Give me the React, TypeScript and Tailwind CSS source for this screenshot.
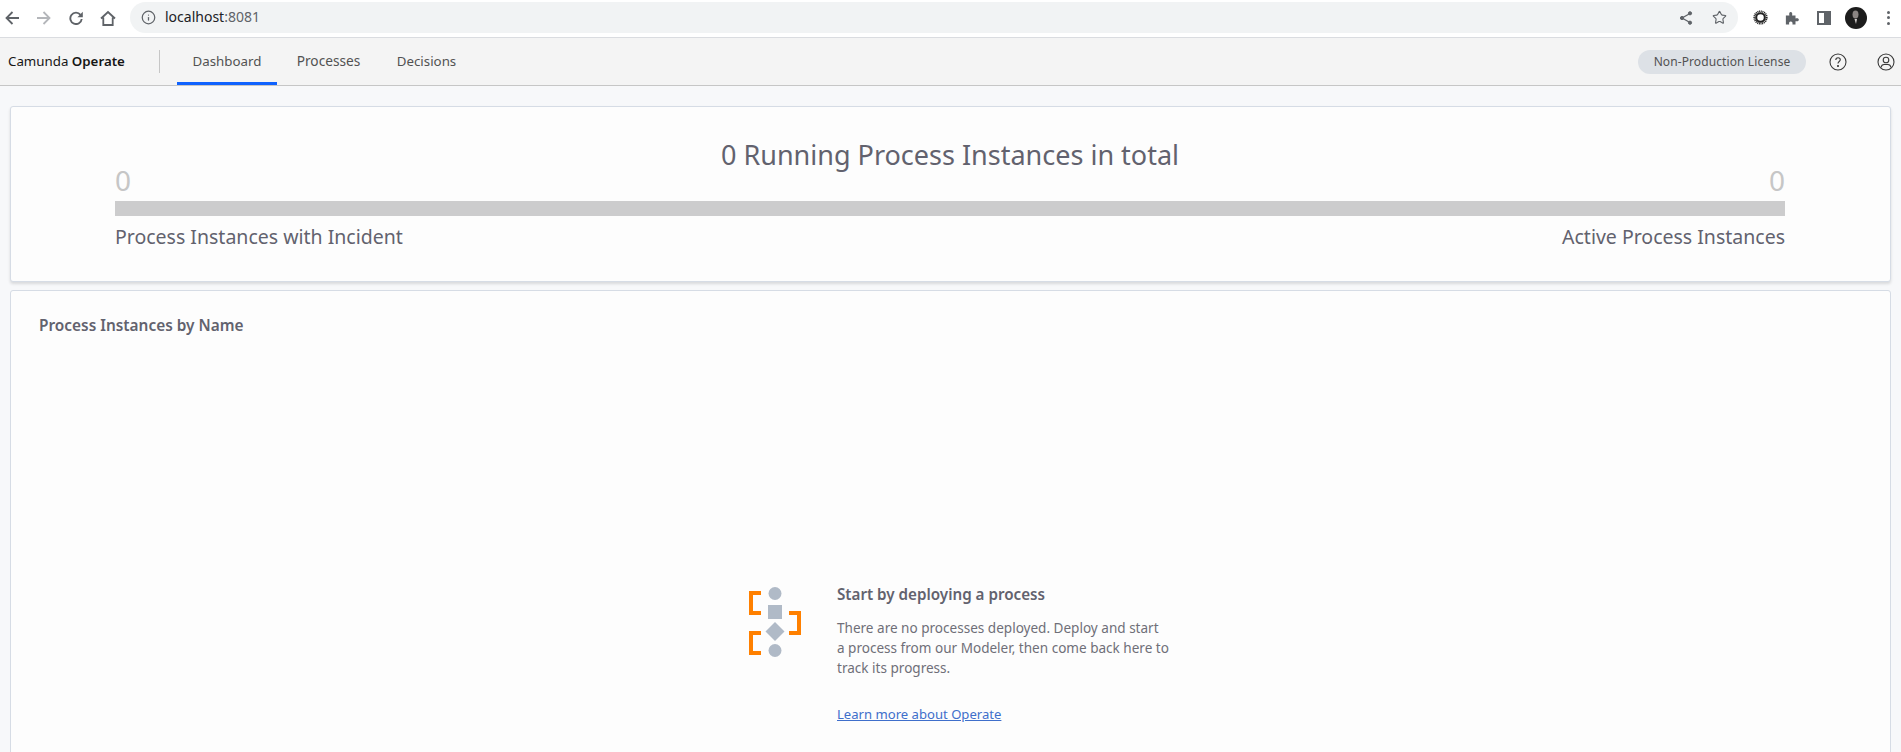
import { Info, Star } from 'lucide-react';

const ChromeBar = () => (
	<div className="flex h-[38px] items-center border-b border-[#dadce0] bg-white pb-[2px]">
		<div className="flex w-[130px] shrink-0 items-center pl-[5px]">
			<svg width="14" height="14" viewBox="0 0 14 14" fill="none" stroke="#5f6368" strokeWidth="1.8">
				<path d="M14 7H1.500M7.500 1 1.500 7l6 6" />
			</svg>
			<svg className="ml-[18px]" width="14" height="14" viewBox="0 0 14 14" fill="none" stroke="#b4b6ba" strokeWidth="1.8">
				<path d="M0 7h12.500M6.500 1l6 6-6 6" />
			</svg>
			<svg className="ml-[18px]" width="14" height="14" viewBox="0 0 14 14" fill="none" stroke="#5f6368" strokeWidth="1.9">
				<path d="M11.500 3.800A5.700 5.700 0 1 0 12.700 8" />
				<path d="M13.800.8v5.400H8.400z" fill="#5f6368" stroke="none" />
			</svg>
			<svg className="ml-[17px]" width="16" height="16" viewBox="0 0 16 16" fill="none" stroke="#5f6368" strokeWidth="1.8">
				<path d="M1 8.500 8 2l7 6.500M3.300 7.500V15h9.400V7.500" />
			</svg>
		</div>
		<div className="flex h-[31px] w-[1608px] items-center rounded-full bg-[#f1f3f4] pl-[11px]">
			<Info className="text-[#5f6368]" size={15} strokeWidth={2} />
			<span className="ml-[9px] mt-[-2px] text-[14px] text-[#202124]">
				localhost<span className="text-[#5f6368]">:8081</span>
			</span>
			<div className="ml-auto flex items-center gap-[19px] pr-[11px]">
				<svg width="14" height="14" viewBox="0 0 14 14" fill="#5f6368" stroke="#5f6368">
					<path d="M11 2.500 3 7l8 4.500" fill="none" strokeWidth="1.300" />
					<circle cx="11" cy="2.300" r="1.600" />
					<circle cx="3" cy="7" r="1.600" />
					<circle cx="11" cy="11.700" r="1.600" />
				</svg>
				<Star className="text-[#5f6368]" size={15} strokeWidth={1.8} />
			</div>
		</div>
		<div className="ml-[15px] flex items-center">
			<svg width="15" height="15" viewBox="0 0 16 16" fill="none" stroke="#222">
				<circle cx="8" cy="8" r="4.600" strokeWidth="2.200" />
				<circle cx="8" cy="8" r="6.600" strokeWidth="2" strokeDasharray="1.100 0.700" />
			</svg>
			<svg className="ml-[17px]" width="14" height="14" viewBox="0 0 16 16" fill="#5f6368">
				<path d="M1 5h4c-.6-2.600 0-4 1.500-4s2.200 1.400 1.600 4h3.900v3.600c2.400-.6 3.800 0 3.800 1.500s-1.400 2.100-3.800 1.500V15.500H8.500c.5-2.400-.3-3.500-1.900-3.500S4.300 13.100 4.800 15.500H1z" />
			</svg>
			<div className="ml-[18px] flex h-[14px] w-[14px] justify-start border-2 border-[#5f6368] bg-[#5f6368]">
				<div className="h-full w-[5px] bg-white" />
			</div>
			<svg className="ml-[14px]" width="22" height="22" viewBox="0 0 22 22">
				<circle cx="11" cy="11" r="11" fill="#1c1c1c" />
				<ellipse cx="10.500" cy="7.500" rx="3" ry="4" fill="#8b8583" />
				<path d="M9.500 12h2.500l-1 5z" fill="#cfcac8" />
			</svg>
			<div className="ml-[20px] flex flex-col gap-[2.500px]">
				<div className="h-[3px] w-[3px] rounded-full bg-[#5f6368]" />
				<div className="h-[3px] w-[3px] rounded-full bg-[#5f6368]" />
				<div className="h-[3px] w-[3px] rounded-full bg-[#5f6368]" />
			</div>
		</div>
	</div>
);

const TopNav = () => (
	<header className="flex h-[48px] items-stretch border-b border-[#c6c6c6] bg-[#f4f4f4] text-[13.3px]">
		<div className="flex w-[159px] items-center pl-[8px] text-[#161616]">
			Camunda&nbsp;<span className="font-semibold">Operate</span>
		</div>
		<div className="my-[12px] w-px bg-[#c6c6c6]" />
		<nav className="ml-[17px] flex">
			<a className="flex w-[100px] items-center justify-center border-b-[3px] border-[#0f62fe] pt-[3px] text-[#525252]">Dashboard</a>
			<a className="flex w-[103px] items-center justify-center text-[13.7px] text-[#525252]">Processes</a>
			<a className="flex w-[93px] items-center justify-center text-[#525252]">Decisions</a>
		</nav>
		<div className="ml-auto flex items-center">
			<span className="flex h-[24px] w-[168px] items-center justify-center rounded-full bg-[#dde1e6] text-[12px] tracking-[0.1px] text-[#525252]">
				Non-Production License
			</span>
			<svg className="ml-[23px]" width="18" height="18" viewBox="0 0 18 18" fill="none" stroke="#393939" strokeWidth="1.100">
				<circle cx="9" cy="9" r="8" />
				<path d="M6.800 7c0-1.400 1-2.300 2.300-2.300S11.300 5.600 11.300 6.800c0 1.700-2.300 1.800-2.300 3.700" />
				<circle cx="9" cy="13" r=".5" fill="#393939" />
			</svg>
			<svg className="ml-[30px] mr-[6px]" width="18" height="18" viewBox="0 0 18 18" fill="none" stroke="#393939" strokeWidth="1.100">
				<circle cx="9" cy="9" r="8" />
				<circle cx="9" cy="7" r="2.800" />
				<path d="M4 14.500c.4-2 1.500-3 3-3h4c1.500 0 2.600 1 3 3" />
			</svg>
		</div>
	</header>
);

const MetricPanel = () => (
	<section className="h-[176px] shrink-0 rounded-[3px] border border-[#d6dce5] bg-[#fdfdfd] pl-[104px] pr-[105px] pt-[30px] shadow-[0_2px_3px_rgba(0,0,0,0.12)]">
		<h1 className="text-center text-[27px] leading-[36px] text-[#62626e]">0 Running Process Instances in total</h1>
		<div className="mt-[-11px] flex justify-between text-[28px] leading-[36px] text-[#c6c6c6]">
			<span>0</span>
			<span>0</span>
		</div>
		<div className="mt-[3px] h-[15px] bg-[#cccccd]" />
		<div className="mt-[7px] flex justify-between text-[19.5px] leading-[28px] text-[#62626e]">
			<span>Process Instances with Incident</span>
			<span>Active Process Instances</span>
		</div>
	</section>
);

const EmptyIcon = () => (
	<svg width="52" height="70" viewBox="0 0 52 70" className="mt-[3px] shrink-0">
		<g fill="none" stroke="#ff8000" strokeWidth="4">
			<path d="M12 6H2v20h10" />
			<path d="M40 26h10v20H40" />
			<path d="M12 46H2v20h10" />
		</g>
		<g fill="#b0bac7">
			<circle cx="26" cy="6.500" r="6.500" />
			<rect x="19" y="18" width="14" height="14" />
			<path d="M26 35l9.500 9.500L26 54l-9.500-9.500z" />
			<circle cx="26" cy="63.500" r="6.500" />
		</g>
	</svg>
);

const InstancesPanel = () => (
	<section className="mt-[8px] h-[600px] shrink-0 rounded-[3px] border border-[#d6dce5] bg-[#fdfdfd] pl-[28px] pt-[23px]">
		<h2 className="text-[15.4px] font-semibold leading-[24px] text-[#62626e]">Process Instances by Name</h2>
		<div className="ml-[710px] mt-[246px] flex">
			<EmptyIcon />
			<div className="ml-[36px] w-[340px]">
				<h3 className="text-[15.2px] font-semibold leading-[20px] text-[#62626e]">Start by deploying a process</h3>
				<p className="mt-[14px] text-[13.55px] leading-[20px] text-[#6f6f78]">
					There are no processes deployed. Deploy and start
					<br />a process from our Modeler, then come back here to
					<br />track its progress.
				</p>
				<a className="mt-[26px] block text-[13.1px] leading-[20px] text-[#3f6fcb] underline">Learn more about Operate</a>
			</div>
		</div>
	</section>
);

export default function App() {
	return (
		<div className="flex h-[752px] flex-col overflow-hidden bg-[#f7f8fa] font-['Noto_Sans',sans-serif]">
			<ChromeBar />
			<TopNav />
			<main className="flex min-h-0 flex-1 flex-col overflow-hidden px-[10px] pt-[20px]">
				<MetricPanel />
				<InstancesPanel />
			</main>
		</div>
	);
}
